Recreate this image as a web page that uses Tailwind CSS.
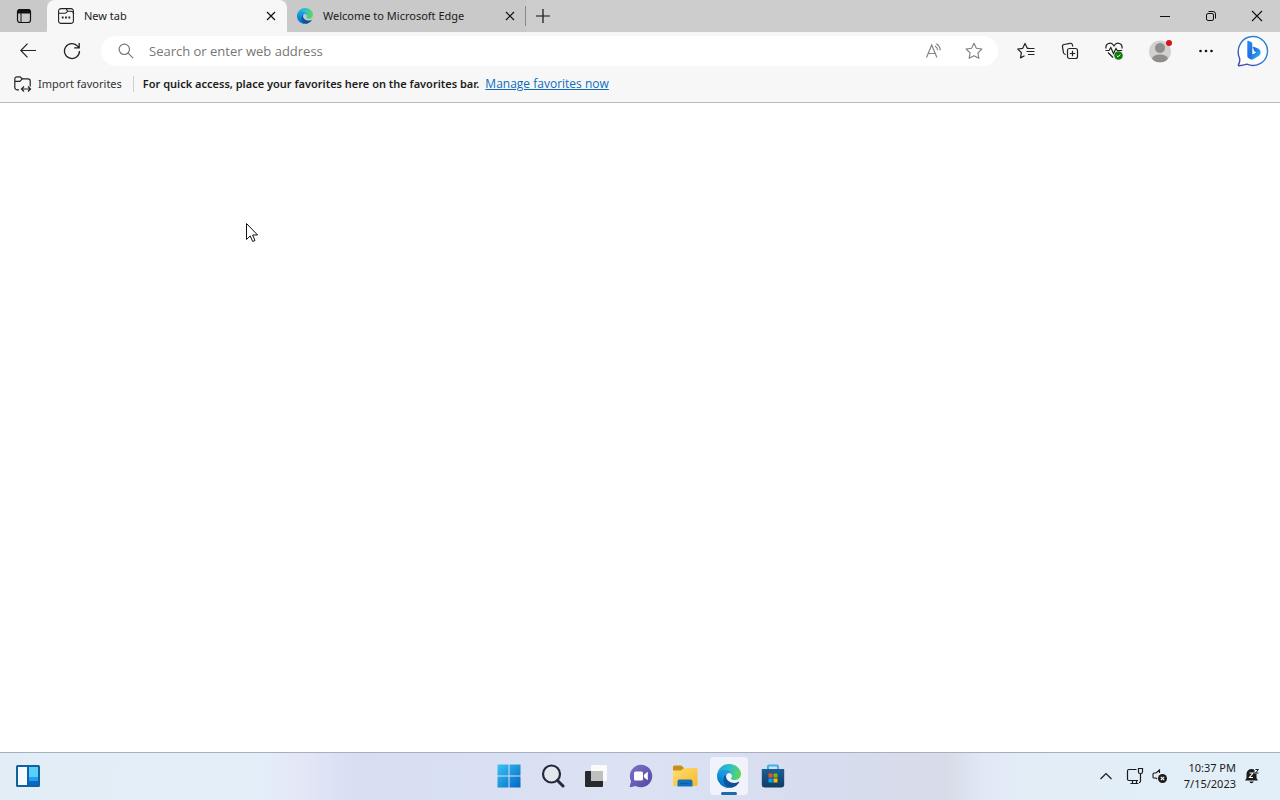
<!DOCTYPE html>
<html lang="en">
<head>
    <meta charset="UTF-8">
    <meta name="viewport" content="width=device-width, initial-scale=1.0">
    <title>New tab</title>
    <script src="https://cdn.jsdelivr.net/npm/@tailwindcss/browser@4"></script>
</head>
<body class="h-screen flex flex-col overflow-hidden bg-white text-[#1b1b1b] text-[11px] leading-4 font-['Noto_Sans','Open_Sans',sans-serif]">

    <!-- Shared gradients -->
    <svg class="absolute w-0 h-0" aria-hidden="true">
        <defs>
            <linearGradient id="edge-dark" x1="0" y1="0.5" x2="1" y2="0.5">
                <stop offset="0" stop-color="#0c59a4"/>
                <stop offset="1" stop-color="#114a8b"/>
            </linearGradient>
            <linearGradient id="edge-blue" x1="0.8" y1="0.2" x2="0.3" y2="1">
                <stop offset="0" stop-color="#1b9de2"/>
                <stop offset="0.4" stop-color="#1595df"/>
                <stop offset="1" stop-color="#0067c0"/>
            </linearGradient>
            <linearGradient id="edge-top" x1="0" y1="0.4" x2="1" y2="0.6">
                <stop offset="0" stop-color="#23a7dd"/>
                <stop offset="0.5" stop-color="#32c1c4"/>
                <stop offset="1" stop-color="#62d750"/>
            </linearGradient>
            <linearGradient id="win" x1="0" y1="0" x2="1" y2="1">
                <stop offset="0" stop-color="#3cc4f4"/>
                <stop offset="1" stop-color="#0067c4"/>
            </linearGradient>
            <linearGradient id="bing" x1="0" y1="0" x2="1" y2="1">
                <stop offset="0" stop-color="#2d8cf0"/>
                <stop offset="0.5" stop-color="#1f6fe0"/>
                <stop offset="1" stop-color="#35c5f0"/>
            </linearGradient>
            <linearGradient id="bubble" x1="0" y1="1" x2="1" y2="0">
                <stop offset="0" stop-color="#4a3fa8"/>
                <stop offset="0.5" stop-color="#2b78d8"/>
                <stop offset="1" stop-color="#2a8fd0"/>
            </linearGradient>
            <linearGradient id="folder" x1="0" y1="0" x2="1" y2="1">
                <stop offset="0" stop-color="#ffdf72"/>
                <stop offset="1" stop-color="#f5b92a"/>
            </linearGradient>
            <linearGradient id="store" x1="0" y1="0" x2="0" y2="1">
                <stop offset="0" stop-color="#1b5f96"/>
                <stop offset="1" stop-color="#123a63"/>
            </linearGradient>
            <linearGradient id="chat" x1="0" y1="0" x2="1" y2="1">
                <stop offset="0" stop-color="#7f72c9"/>
                <stop offset="1" stop-color="#5148a4"/>
            </linearGradient>
            <symbol id="edge-logo" viewBox="0 0 256 256">
                <path d="M231 190.500a93.700 93.700 0 0 1-10.500 4.700 101.900 101.900 0 0 1-35.900 6.500c-47.300 0-88.500-32.600-88.500-74.300a31.500 31.500 0 0 1 16.400-27.300c-42.800 1.800-53.800 46.400-53.800 72.500 0 73.900 68.100 81.400 82.800 81.400 7.900 0 19.800-2.300 27-4.600l1.300-.4a128.300 128.300 0 0 0 66.600-52.800 4 4 0 0 0-5.400-5.700z" fill="url(#edge-dark)"/>
                <path d="M105.700 241.400a79.200 79.200 0 0 1-22.700-21.300 80.700 80.700 0 0 1 29.500-120c3.100-1.500 8.500-4.100 15.500-4a32.400 32.400 0 0 1 25.700 13 31.900 31.900 0 0 1 6.400 18.700c0-.2 24.500-79.600-80-79.600-43.900 0-80 41.700-80 78.200a130.200 130.200 0 0 0 12.100 56 128 128 0 0 0 156.400 67.100 75.600 75.600 0 0 1-62.800-8z" fill="url(#edge-blue)"/>
                <path d="M152.300 148.900c-.8 1-3.300 2.500-3.300 5.600 0 2.600 1.700 5.100 4.700 7.200 14.400 10 41.500 8.700 41.600 8.700a59.600 59.600 0 0 0 30.300-8.400A61.400 61.400 0 0 0 256 109.200c.3-22.400-8-37.300-11.300-43.900C223.500 23.800 177.700 0 128 0A128 128 0 0 0 0 126.200c.5-36.500 36.800-66 80-66 3.500 0 23.500.3 42 10 16.300 8.600 24.900 19 30.900 29.200 6.200 10.700 7.300 24.200 7.300 29.500s-2.700 13.300-7.900 20z" fill="url(#edge-top)"/>
            </symbol>
        </defs>
    </svg>

    <!-- Tab strip -->
    <header class="flex h-8 shrink-0 bg-[#cdcdcd] text-[#1b1b1b]">
        <button aria-label="Tab actions menu" class="w-[47px] flex items-center justify-center rounded-br-md bg-[#c9c9c9]">
            <svg class="w-4 h-4" viewBox="0 0 16 16" fill="none" stroke="#111">
                <rect x="1.500" y="1.500" width="13" height="13" rx="2.500" stroke-width="1.200"/>
                <path d="M1.500 5V4a2.500 2.500 0 0 1 2.500-2.500h8A2.500 2.500 0 0 1 14.500 4v1z" fill="#111"/>
                <path d="M5 5v9.500" stroke-width="1"/>
            </svg>
        </button>
        <div class="w-60 flex items-center rounded-t-lg bg-[#f7f7f7] pl-[11px] pr-2">
            <svg class="w-4 h-4 shrink-0" viewBox="0 0 16 16" fill="none" stroke="#222" stroke-width="1.100">
                <path d="M3 .6h5l1.600 2.600H13A2.400 2.400 0 0 1 15.400 5.600V13a2.400 2.400 0 0 1-2.400 2.400H3A2.400 2.400 0 0 1 .6 13V3A2.400 2.400 0 0 1 3 .6z"/>
                <path d="M8 .6h5A2.400 2.400 0 0 1 15.400 3v3M.6 5.200h6.500c1 0 1.500-.6 2.500-2"/>
                <path d="M3.800 9.500h1.800M7.100 9.500h1.800M10.400 9.500h1.800" stroke-width="1.800"/>
            </svg>
            <span class="pl-2.5 flex-1">New tab</span>
            <button aria-label="Close tab" class="w-4 h-4 flex items-center justify-center">
                <svg class="w-2.5 h-2.5" viewBox="0 0 10 10" stroke="#111" stroke-width="1.200"><path d="M1 1l8 8M9 1l-8 8"/></svg>
            </button>
        </div>
        <div class="w-60 flex items-center rounded-bl-md bg-[#c9c9c9] pl-2.5">
            <svg class="w-4 h-4 shrink-0"><use href="#edge-logo"/></svg>
            <span class="pl-2.5 flex-1 whitespace-nowrap">Welcome to Microsoft Edge</span>
            <button aria-label="Close tab" class="w-4 h-4 flex items-center justify-center">
                <svg class="w-2.5 h-2.5" viewBox="0 0 10 10" stroke="#111" stroke-width="1.200"><path d="M1 1l8 8M9 1l-8 8"/></svg>
            </button>
            <span class="w-px h-5 ml-[7px] mr-px bg-[#8a8a8a]"></span>
        </div>
        <button aria-label="New tab" class="w-8 flex items-center justify-center">
            <svg class="w-4 h-4" viewBox="0 0 16 16" stroke="#111" stroke-width="1.200"><path d="M8 1v14M1 8h14"/></svg>
        </button>
        <div class="ml-auto flex">
            <button aria-label="Minimize" class="w-[46px] flex items-center justify-center">
                <svg class="w-3 h-3" viewBox="0 0 12 12" stroke="#111"><path d="M1 6.500h10"/></svg>
            </button>
            <button aria-label="Restore" class="w-[46px] flex items-center justify-center">
                <svg class="w-3 h-3" viewBox="0 0 12 12" fill="none" stroke="#111">
                    <rect x="1.500" y="3.500" width="7" height="7" rx="1.500"/>
                    <path d="M3.500 1.500H8A2.500 2.500 0 0 1 10.500 4v4.500"/>
                </svg>
            </button>
            <button aria-label="Close" class="w-[46px] flex items-center justify-center">
                <svg class="w-3 h-3" viewBox="0 0 12 12" stroke="#111" stroke-width="1.100"><path d="M1 1l10 10M11 1L1 11"/></svg>
            </button>
        </div>
    </header>

    <!-- Toolbar -->
    <nav class="flex items-center h-[38px] shrink-0 pl-1.5 pr-[5px] bg-[#f7f7f7]">
        <button aria-label="Back" class="w-11 h-8 flex items-center justify-center">
            <svg class="w-4 h-4" viewBox="0 0 16 16" fill="none" stroke="#222" stroke-width="1.200"><path d="M16 7.500H.8M7.500.7L.8 7.500l6.700 6.800"/></svg>
        </button>
        <button aria-label="Refresh" class="w-11 h-8 flex items-center justify-center">
            <svg class="w-[18px] h-[18px]" viewBox="0 0 18 18" fill="none" stroke="#222" stroke-width="1.300"><path d="M16.500 9A7.500 7.500 0 1 1 14.800 4.300L16 5.500M16.200 1v4.800h-5"/></svg>
        </button>
        <label class="ml-[7px] mr-1.5 h-[30px] flex-1 flex items-center rounded-full bg-white pl-4 pr-2">
            <svg class="w-4 h-4 mx-px shrink-0" viewBox="0 0 16 16" fill="none" stroke="#767676" stroke-width="1.200"><circle cx="6.300" cy="6.300" r="5.200"/><path d="M10.100 10.100l5 5"/></svg>
            <input type="text" aria-label="Address bar" placeholder="Search or enter web address" class="ml-3.5 min-w-0 flex-1 bg-transparent font-['Open_Sans','Noto_Sans',sans-serif] text-[13px] outline-none placeholder:text-[#767676]">
            <button aria-label="Read aloud" class="w-10 h-7 flex items-center justify-center">
                <svg class="w-[18px] h-[18px]" viewBox="0 0 18 18" fill="none" stroke="#858585" stroke-width="1.200">
                    <path d="M1.500 15.500L6.700 3l5.200 12.500M3.200 11.500h7"/>
                    <path d="M10 4a5.500 5.500 0 0 1 2.700 4.200M11.300 1.700a8 8 0 0 1 4 6.500"/>
                </svg>
            </button>
            <button aria-label="Add this page to favorites" class="w-10 h-7 -mr-1 flex items-center justify-center">
                <svg class="w-[18px] h-[18px]" viewBox="0 0 18 18" fill="none" stroke="#7d7d7d" stroke-width="1.100" stroke-linejoin="round"><path d="M9 1.200l2.400 5 5.500.8-4 3.800 1 5.500L9 13.700l-4.900 2.600 1-5.500-4-3.800 5.500-.8z"/></svg>
            </button>
        </label>
        <button aria-label="Favorites" class="w-11 h-8 flex items-center justify-center">
            <svg class="w-[18px] h-[18px]" viewBox="0 0 18 18" fill="none" stroke="#222" stroke-width="1.200" stroke-linejoin="round"><path d="M12 6.300H10.300L8 1.500 5.700 6.300l-5 .7 3.700 3.600-.9 5.300 4-2.100M11 6.500h6.500M9.500 9.500h8M11 12.500h6.500"/></svg>
        </button>
        <button aria-label="Collections" class="w-11 h-8 flex items-center justify-center">
            <svg class="w-[18px] h-[18px]" viewBox="0 0 18 18" fill="none" stroke="#222" stroke-width="1.200">
                <rect x="6.500" y="6.500" width="10" height="10" rx="2"/>
                <path d="M11.500 8.800v5.400M8.800 11.500h5.400"/>
                <path d="M4.700 12.500L3.500 12A2 2 0 0 1 2.400 10.300L1.500 4.800a2 2 0 0 1 1.600-2.300l6-1.200a2 2 0 0 1 2.300 1.600l.3 1.600"/>
            </svg>
        </button>
        <button aria-label="Browser essentials" class="w-11 h-8 flex items-center justify-center">
            <svg class="w-[18px] h-[18px]" viewBox="0 0 18 18" fill="none" stroke="#222" stroke-width="1.200">
                <path d="M1.200 6.500A4 4 0 0 1 8.500 3.300l.5.700.5-.7a4 4 0 0 1 7.300 3.200M3 10.500l5 5"/>
                <path d="M.5 8.500H4l1.800-3 2.700 6 2.500-5 1.200 2h5"/>
                <circle cx="13.500" cy="13.500" r="4.300" fill="#107c10" stroke="none"/>
                <path d="M11.800 13.700l1.200 1.100 2.300-2.300" stroke="#fff" stroke-width="1"/>
            </svg>
        </button>
        <button aria-label="Profile" class="w-11 h-8 mx-0.5 flex items-center justify-center">
            <svg class="w-6 h-6" viewBox="0 0 24 24">
                <defs><clipPath id="avatar"><circle cx="12" cy="12.500" r="11"/></clipPath></defs>
                <circle cx="12" cy="12.500" r="11" fill="#d2d0ce"/>
                <g clip-path="url(#avatar)" fill="#8f8d8b"><circle cx="12" cy="9" r="5"/><ellipse cx="12" cy="19.500" rx="7.800" ry="4"/></g>
                <circle cx="21" cy="4" r="3" fill="#d3121b"/>
            </svg>
        </button>
        <button aria-label="Settings and more" class="w-11 h-8 flex items-center justify-center">
            <svg class="w-4 h-4" viewBox="0 0 16 16" fill="#111"><circle cx="2.500" cy="8" r="1.300"/><circle cx="8" cy="8" r="1.300"/><circle cx="13.500" cy="8" r="1.300"/></svg>
        </button>
        <button aria-label="Bing Chat" class="w-11 h-8 ml-[3px] flex items-center justify-center">
            <svg class="w-8 h-8" viewBox="0 0 32 32">
                <path d="M16 1.500A14.500 14.500 0 1 1 10 29.200c-2.700.9-5.300 1.400-8 1.500-.6 0-.8-.5-.5-1 1-1.700 1.500-3.700 1.200-6C-2 13 5 1.500 16 1.500z" fill="#fff" stroke="url(#bubble)" stroke-width="1.400"/>
                <path d="M10.300 6.500c0-.6.500-.9 1-.7l2.800 1.100c.8.400 1.200 1 1.200 1.900v10.800l4-2.200-2-1.200-1.500-3.700c-.2-.6.300-1 .8-.8l4.500 1.700c1.800.8 2.500 2.200 2.500 4 0 1.600-.6 2.700-1.900 3.500l-5.500 3.300c-1 .6-2 .6-3 0l-1.500-.9c-1-.6-1.400-1.400-1.400-2.500z" fill="url(#bing)"/>
            </svg>
        </button>
    </nav>

    <!-- Favorites bar -->
    <section class="flex items-center h-[33px] shrink-0 pl-3.5 pb-1 bg-[#f7f7f7] border-b border-[#b9b9b9]">
        <button class="flex items-center">
            <svg class="w-[18px] h-[18px]" viewBox="0 0 18 18" fill="none" stroke="#222" stroke-width="1.200">
                <path d="M5 14.800H3A2.200 2.200 0 0 1 .8 12.600V4A2.200 2.200 0 0 1 3 1.800h3l2.300 2H14A2.200 2.200 0 0 1 16.200 6v5.500M.8 6.400h5L8.300 3.800"/>
                <path d="M7.500 14h9M10 11.500L7.500 14l2.500 2.500M14 11.500l2.500 2.500-2.500 2.500"/>
            </svg>
            <span class="pl-1.5 text-[#333]">Import favorites</span>
        </button>
        <span class="w-px h-4 ml-[11px] mr-[9px] bg-[#cfcfcf]"></span>
        <p class="font-semibold text-[#1b1b1b]">For quick access, place your favorites here on the favorites bar.</p>
        <a href="#" class="ml-1.5 text-[#0f6cbd] font-['Open_Sans','Noto_Sans',sans-serif] text-xs underline">Manage favorites now</a>
    </section>

    <!-- Page content -->
    <main class="relative flex-1 bg-white">
        <svg class="absolute left-[245px] top-[119px] w-[14px] h-[22px]" viewBox="0 0 14 22" fill="#fff" stroke="#111" stroke-width="1"><path d="M1.500 1.500v16l3.700-3.600 2.500 5.600 2.300-1-2.400-5.500h5z"/></svg>
    </main>

    <!-- Taskbar -->
    <footer class="grid grid-cols-[1fr_auto_1fr] items-center h-12 shrink-0 pb-px border-t border-[#a9afc0] bg-[linear-gradient(90deg,#e2edf5_0%,#e4eef9_20%,#e2e6f6_24%,#d7def2_28%,#dae2f3_50%,#d7dcee_66%,#d8dce9_74%,#e1e8f6_77%,#e2edf6_80%,#e3eff8_100%)]">
        <button aria-label="Widgets" class="w-11 h-11 ml-1.5 flex items-center justify-center">
            <svg class="w-6 h-[22px]" viewBox="0 0 24 22">
                <rect width="24" height="22" rx="1.500" fill="#12629f"/>
                <path d="M2 2h9v18H2z" fill="#f4faff"/>
                <path d="M13 2h9v10h-9z" fill="#56cffb"/>
                <path d="M13 12h9v4h-9z" fill="#1f9ff0"/>
                <path d="M13 16h9v4h-9z" fill="#0c68c4"/>
            </svg>
        </button>

        <div class="flex items-center pl-px">
            <button aria-label="Start" class="w-11 h-10 flex items-center justify-center">
                <svg class="w-6 h-6" viewBox="0 0 24 24" fill="url(#win)"><path d="M.5.5h11v11H.5zM12.500.5h11v11h-11zM.5 12.500h11v11H.5zM12.500 12.500h11v11h-11z"/></svg>
            </button>
            <button aria-label="Search" class="w-11 h-10 flex items-center justify-center">
                <svg class="w-6 h-6" viewBox="0 0 24 24" fill="none" stroke="#242b38"><circle cx="10.500" cy="10" r="8.500" stroke-width="2.200" fill="#e3e7ee"/><path d="M16.500 16.500l5.500 5.500" stroke-width="3" stroke-linecap="round"/></svg>
            </button>
            <button aria-label="Task view" class="w-11 h-10 flex items-center justify-center">
                <svg class="w-6 h-6" viewBox="0 0 24 24">
                    <rect x="0" y="7" width="18" height="16" rx="1" fill="#27292c"/>
                    <rect x="6" y="1" width="16" height="16" rx="1" fill="#fbfbfb"/>
                    <path d="M6 7h12v10H6z" fill="#bfbfbf"/>
                </svg>
            </button>
            <button aria-label="Chat" class="w-11 h-10 flex items-center justify-center">
                <svg class="w-6 h-6" viewBox="0 0 24 24">
                    <path d="M12 .8a11.200 11.200 0 1 1-5.200 21.100L1.500 23.200c-.6.100-.9-.3-.8-.8l1.400-5.200A11.200 11.200 0 0 1 12 .8z" fill="url(#chat)"/>
                    <rect x="5" y="7.500" width="9" height="9" rx="1.500" fill="#fff"/>
                    <path d="M15 10.800l3-2.600c.4-.3.800-.1.800.4v6.800c0 .5-.4.700-.8.400l-3-2.600z" fill="#fff"/>
                </svg>
            </button>
            <button aria-label="File Explorer" class="w-11 h-10 flex items-center justify-center">
                <svg class="w-[26px] h-6" viewBox="0 0 26 24">
                    <path d="M1 3a1.500 1.500 0 0 1 1.500-1.500h6.800L12 4v5H1z" fill="#c98f17"/>
                    <path d="M1 6.500h8L12 4h12a1.500 1.500 0 0 1 1.500 1.500v15A1.500 1.500 0 0 1 24 22H2.500A1.500 1.500 0 0 1 1 20.500z" fill="url(#folder)"/>
                    <path d="M5.500 22.500v-5a2 2 0 0 1 2-2h11a2 2 0 0 1 2 2v5z" fill="#1272c0"/>
                    <path d="M8 19.500h10" stroke="#0b5ca3" stroke-width="1.200"/>
                </svg>
            </button>
            <button aria-label="Microsoft Edge" class="w-11 h-10 flex items-center justify-center">
                <span class="relative w-[38px] h-[38px] flex items-center justify-center rounded bg-[#f0f3fa]">
                    <svg class="w-6 h-6"><use href="#edge-logo"/></svg>
                    <span class="absolute bottom-0 w-4 h-[3px] rounded-full bg-[#1f68ad]"></span>
                </span>
            </button>
            <button aria-label="Microsoft Store" class="w-11 h-10 flex items-center justify-center">
                <svg class="w-6 h-6" viewBox="0 0 24 24">
                    <path d="M7 6V2.500a1 1 0 0 1 1-1h8a1 1 0 0 1 1 1V6" fill="none" stroke="#35b3ea" stroke-width="2"/>
                    <path d="M.8 5h22.400v15.500a3 3 0 0 1-3 3H3.800a3 3 0 0 1-3-3z" fill="url(#store)"/>
                    <path d="M7.500 9.500h4v4h-4z" fill="#f25022"/>
                    <path d="M12.500 9.500h4v4h-4z" fill="#7fba00"/>
                    <path d="M7.500 14.500h4v4h-4z" fill="#00a4ef"/>
                    <path d="M12.500 14.500h4v4h-4z" fill="#ffb900"/>
                </svg>
            </button>
        </div>

        <!-- System tray -->
        <div class="flex items-center justify-end pr-5">
            <button aria-label="Show hidden icons" class="w-7 h-10 flex items-center justify-center">
                <svg class="w-3 h-3" viewBox="0 0 12 12" fill="none" stroke="#1b1b1b" stroke-width="1.200"><path d="M.5 9L6 3.500 11.500 9"/></svg>
            </button>
            <button aria-label="Network and volume" class="h-10 ml-1.5 flex items-center gap-2">
                <svg class="w-[18px] h-[18px]" viewBox="0 0 18 18" fill="none" stroke="#1b1b1b" stroke-width="1.200">
                    <path d="M10.500 2.500H3A1.500 1.500 0 0 0 1.500 4v8A1.500 1.500 0 0 0 3 13.500h9M4.500 16.500h8M6.500 13.500v3M10.500 13.500v3"/>
                    <path d="M12.500 1.500h4v3.500a1.500 1.500 0 0 1-1.500 1.500h-1a1.500 1.500 0 0 1-1.500-1.500zM14.500 6.500v7.500a1.500 1.500 0 0 1-1.500 1.500"/>
                </svg>
                <svg class="w-4 h-4" viewBox="0 0 16 16" fill="none" stroke="#1b1b1b">
                    <path d="M7.500 5V2L4 5H2A1 1 0 0 0 1 6v3a1 1 0 0 0 1 1h2l1 1" stroke-width="1.100"/>
                    <circle cx="10.500" cy="10.500" r="4.500" fill="#1b1b1b" stroke="none"/>
                    <path d="M8.800 8.800l3.400 3.400M12.200 8.800l-3.400 3.400" stroke="#fff" stroke-width="1.100"/>
                </svg>
            </button>
            <button aria-label="Clock" class="ml-4 text-right">
                <time class="block">10:37 PM</time>
                <time class="block">7/15/2023</time>
            </button>
            <button aria-label="Notifications" class="ml-2 h-10 flex items-center">
                <svg class="w-4 h-4" viewBox="0 0 16 16">
                    <path d="M7.500 1a5 5 0 0 0-5 5v4L1 12.500h13L12.500 10V6a5 5 0 0 0-5-5zM5.300 13.500a2.300 2.300 0 0 0 4.400 0z" fill="#1b1b1b"/>
                    <path d="M5.500 5H9L5.500 9.500H9" fill="none" stroke="#fff" stroke-width="1.100"/>
                    <path d="M10.500.5h5v5h-5z" fill="#e3eff8"/>
                    <path d="M11.500 1.500h3l-3 3.500h3" fill="none" stroke="#1b1b1b"/>
                </svg>
            </button>
        </div>
    </footer>
</body>
</html>
